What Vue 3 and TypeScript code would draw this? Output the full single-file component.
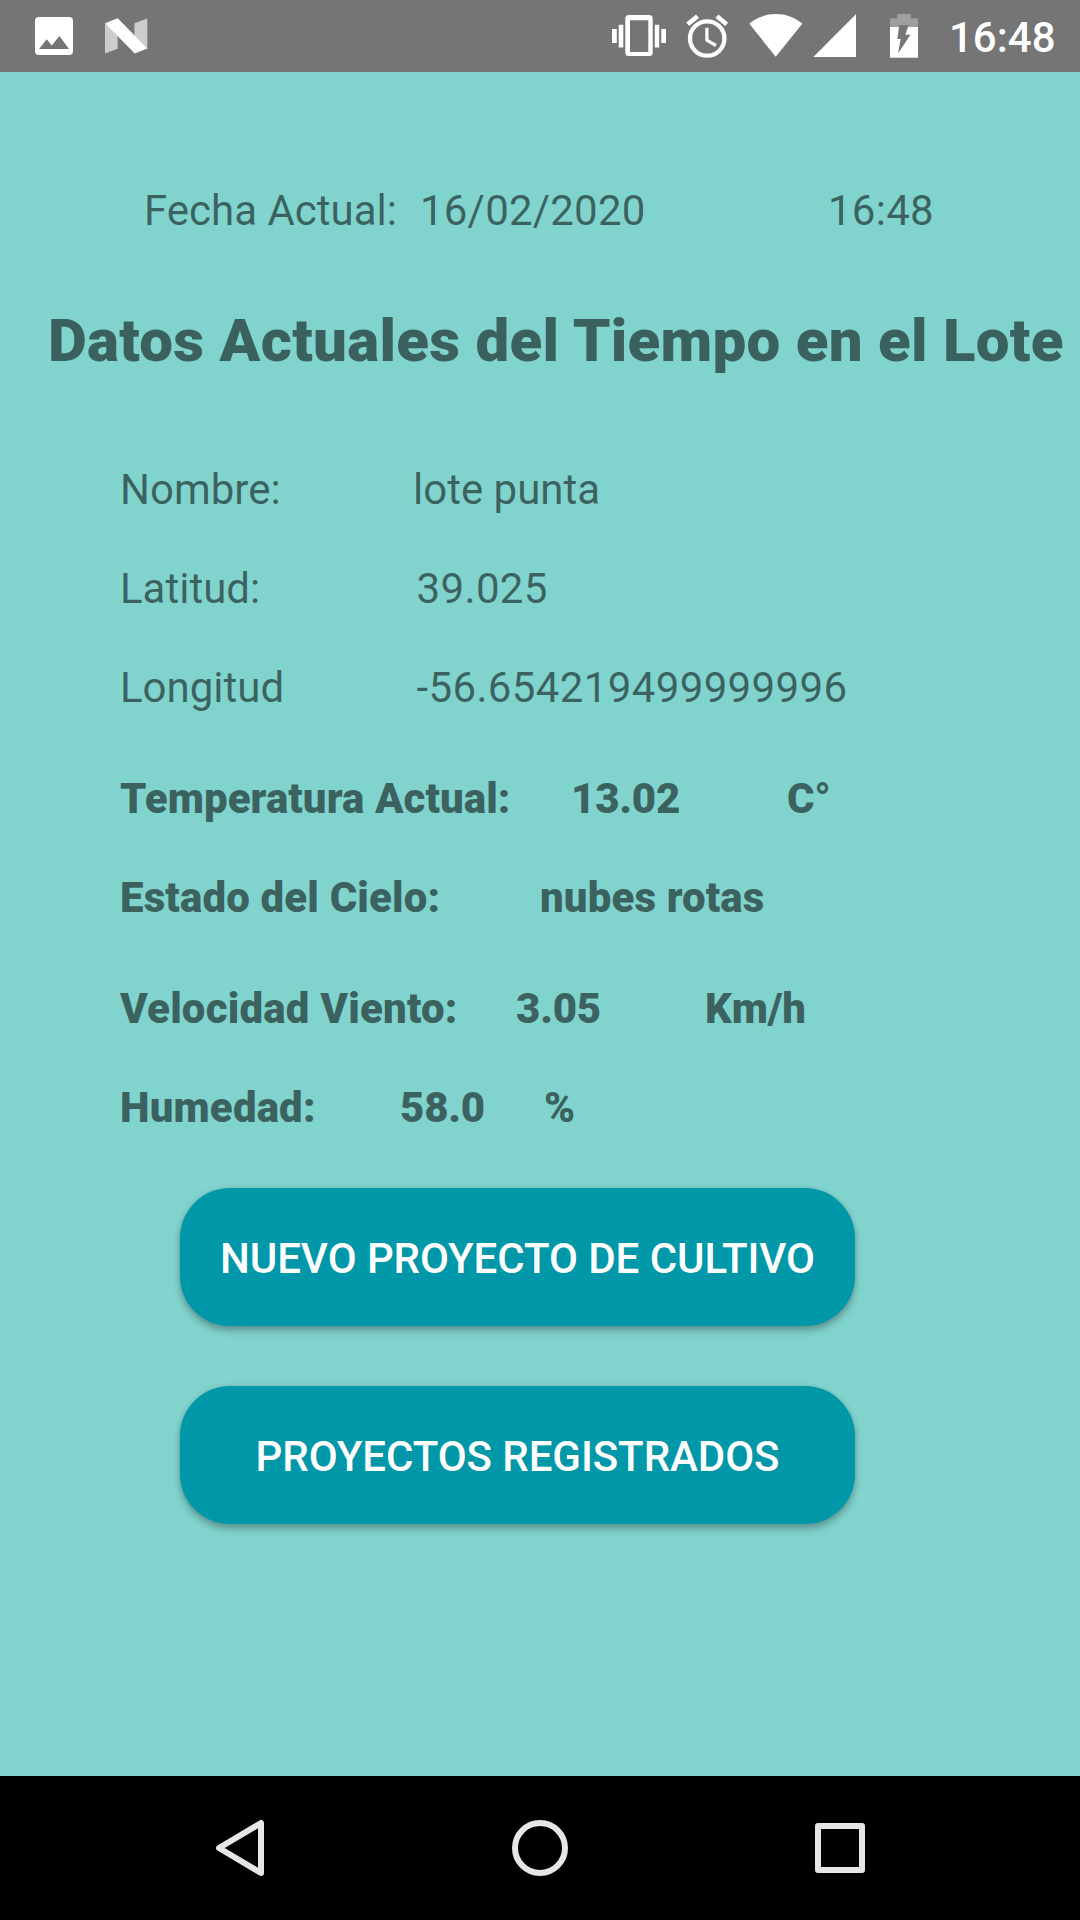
<script setup lang="ts">
interface Field {
  id: string
  label: string
  value: string
  unit?: string
  strong?: boolean
}

const date = '16/02/2020'
const time = '16:48'

const fields: Field[] = [
  { id: 'nombre', label: 'Nombre:', value: 'lote punta' },
  { id: 'latitud', label: 'Latitud:', value: '39.025' },
  { id: 'longitud', label: 'Longitud', value: '-56.654219499999996' },
  { id: 'temperatura', label: 'Temperatura Actual:', value: '13.02', unit: 'C°', strong: true },
  { id: 'cielo', label: 'Estado del Cielo:', value: 'nubes rotas', strong: true },
  { id: 'viento', label: 'Velocidad Viento:', value: '3.05', unit: 'Km/h', strong: true },
  { id: 'humedad', label: 'Humedad:', value: '58.0', unit: '%', strong: true },
]

const actions: string[] = ['Nuevo proyecto de cultivo', 'Proyectos registrados']
</script>

<template>
  <div class="screen">
    <header class="status">
      <svg class="ic-picture" width="38" height="72" viewBox="0 0 38 72">
        <path fill="#fff" fill-rule="evenodd" d="M4 17H34a4 4 0 0 1 4 4V51a4 4 0 0 1-4 4H4a4 4 0 0 1-4-4V21a4 4 0 0 1 4-4ZM4.2 49H34L24.4 36 16.8 45.4 11.6 39.2Z" />
      </svg>
      <svg class="ic-nougat" width="43" height="72" viewBox="0 0 43 72">
        <path fill="#cdcdcd" d="M0 23.5L12.6 34V48.8L0 53.5ZM29.4 23.3L42.3 18.4V48.5L29.4 38Z" />
        <path fill="#fff" d="M0 23.3L12.7 18.2 42.3 48.4 29.8 53.5Z" />
      </svg>
      <div class="spacer"></div>
      <svg class="ic-vibrate" width="54" height="72" viewBox="0 0 54 72">
        <path fill="#fff" d="M0 29H4.8V43H0ZM6.7 24.8H11.3V47.4H6.7ZM42.8 24.8H47.2V47.4H42.8ZM49.3 29H54V43H49.3Z" />
        <path fill="#fff" fill-rule="evenodd" d="M16.8 15H37.2a3.5 3.5 0 0 1 3.5 3.5V52.6a3.5 3.5 0 0 1-3.5 3.5H16.8a3.5 3.5 0 0 1-3.5-3.5V18.5a3.5 3.5 0 0 1 3.5-3.5ZM18 20.3V52H36.3V20.3Z" />
      </svg>
      <svg class="ic-alarm" width="42" height="72" viewBox="0 0 42 72" fill="none" stroke="#fff">
        <circle cx="21.200" cy="38.5" r="17.2" stroke-width="4.3" />
        <path stroke-width="4.6" d="M1.7 24.3L11.5 16.3M30.900 16.3L40.700 24.3" />
        <path stroke-width="3.2" d="M20.9 27.7V40.2L29.9 45.5" />
      </svg>
      <svg class="ic-wifi" width="54" height="72" viewBox="0 0 54 72">
        <path fill="#fff" d="M0.3 23.8C15.5 10.9 38.2 10.9 53.3 23.8L26.7 56.7Z" />
      </svg>
      <svg class="ic-signal" width="43" height="72" viewBox="0 0 43 72">
        <path fill="#fff" d="M0.3 57H43V14.3Z" />
      </svg>
      <svg class="ic-battery" width="28" height="72" viewBox="0 0 28 72">
        <path fill="#9e9e9e" d="M0 27V18.3H7.3V14H20.7V18.3H28V27Z" />
        <path fill="#fff" d="M0 27H28V57.7H0Z" />
        <path fill="#757575" d="M9.3 25.3H18.6L15.3 34.8H20.4L8 53.5 10.7 39H7.3Z" />
      </svg>
      <span class="clock">{{ time }}</span>
    </header>

    <main class="content">
      <div class="now">
        <span class="now-label">Fecha Actual:</span>
        <span class="now-date">{{ date }}</span>
        <span class="now-time">{{ time }}</span>
      </div>

      <h1 class="title">Datos Actuales del Tiempo en el Lote</h1>

      <dl class="fields">
        <div v-for="f in fields" :key="f.id" class="field" :class="[f.id, { strong: f.strong }]">
          <dt>{{ f.label }}</dt>
          <dd>{{ f.value }}</dd>
          <dd v-if="f.unit">{{ f.unit }}</dd>
        </div>
      </dl>

      <div class="actions">
        <button v-for="a in actions" :key="a" type="button" class="action">{{ a }}</button>
      </div>
    </main>

    <nav class="navbar">
      <svg width="60" height="60" viewBox="0 0 60 60">
        <path d="M9 30L51 5V55Z" stroke-linejoin="round" />
      </svg>
      <svg width="60" height="60" viewBox="0 0 60 60">
        <circle cx="30" cy="30" r="25" />
      </svg>
      <svg width="60" height="60" viewBox="0 0 60 60">
        <rect x="8" y="8" width="44" height="44" stroke-linejoin="round" />
      </svg>
    </nav>
  </div>
</template>

<style>
body {
  margin: 0;
}
</style>

<style scoped>
.screen {
  display: flex;
  flex-direction: column;
  width: 1080px;
  height: 1920px;
  overflow: hidden;
  background: #81d3cd;
  color: rgba(0, 0, 0, 0.54);
  font-family: Roboto, "Noto Sans", sans-serif;
  font-size: 42px;
  line-height: 49px;
  white-space: nowrap;
}

.status {
  display: flex;
  flex: none;
  height: 72px;
  padding: 0 24px 0 35px;
  box-sizing: border-box;
  background: #757575;
  color: #fff;
}
.status svg {
  flex: none;
}
.ic-nougat {
  margin-left: 32px;
}
.spacer {
  flex: 1;
}
.ic-alarm {
  margin-left: 20px;
}
.ic-wifi {
  margin-left: 21px;
}
.ic-signal {
  margin-left: 10px;
}
.ic-battery {
  margin-left: 34px;
}
.clock {
  width: 107px;
  margin: 13px 0 0 31px;
  font-weight: 500;
}

.content {
  flex: 1;
  display: flex;
  flex-direction: column;
}
.now {
  display: flex;
  margin: 114px 0 0 144px;
}
.now-label {
  width: 276px;
}
.now-date {
  width: 408px;
  letter-spacing: 0.2px;
}
.now-time {
  letter-spacing: 0.25px;
}
.title {
  margin: 71px 0 0 48px;
  font-size: 60px;
  line-height: 70px;
  font-weight: 900;
  letter-spacing: 0.28px;
}

.fields {
  display: flex;
  flex-direction: column;
  gap: 50px;
  margin: 89px 0 0 120px;
}
.field {
  display: grid;
  height: 49px;
}
.field dd {
  margin: 0;
}
.strong {
  font-weight: 900;
}
.strong dt {
  letter-spacing: 0.15px;
}
.nombre {
  grid-template-columns: 293px auto;
}
.latitud,
.longitud {
  grid-template-columns: 296.5px auto;
}
.latitud dd,
.longitud dd {
  letter-spacing: 0.37px;
}
.temperatura {
  grid-template-columns: 451px 216px auto;
  margin-top: 12px;
}
.temperatura dt {
  letter-spacing: 0.07px;
}
.cielo {
  grid-template-columns: 420px auto;
}
.cielo dd {
  letter-spacing: 0.12px;
}
.viento {
  grid-template-columns: 396px 189px auto;
  margin-top: 12px;
}
.viento dt {
  letter-spacing: 0.19px;
}
.humedad {
  grid-template-columns: 280px 144px auto;
}
.temperatura dd,
.viento dd,
.humedad dd {
  letter-spacing: -0.2px;
}

.actions {
  display: flex;
  flex-direction: column;
  gap: 60px;
  margin: 56px 0 0 180px;
}
.action {
  width: 675px;
  height: 138px;
  padding: 3px 0 0;
  border: 0;
  border-radius: 50px;
  background: #0097a9;
  color: #fff;
  font: 500 42px/49px Roboto, "Noto Sans", sans-serif;
  letter-spacing: -0.06px;
  text-transform: uppercase;
  box-shadow: 0 5px 7px rgba(0, 0, 0, 0.26), 0 0 5px rgba(0, 0, 0, 0.1);
}

.navbar {
  display: flex;
  flex: none;
  justify-content: center;
  align-items: center;
  gap: 240px;
  height: 144px;
  background: #000;
}
.navbar svg {
  fill: none;
  stroke: #e6e6e6;
  stroke-width: 6;
}
</style>
